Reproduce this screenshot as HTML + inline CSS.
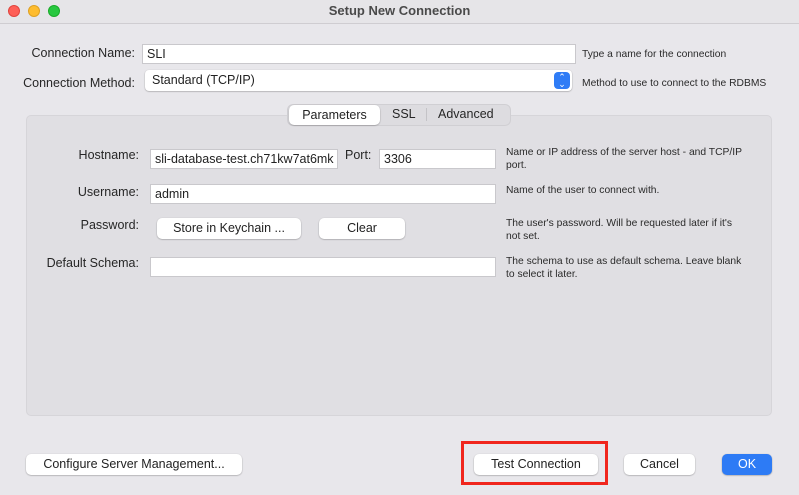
<!DOCTYPE html>
<html><head><meta charset="utf-8"><style>
*{box-sizing:border-box;margin:0;padding:0}
body{width:799px;height:495px;background:#e8e7eb;font-family:"Liberation Sans",sans-serif;font-size:12.5px;color:#262626;position:relative;overflow:hidden}
.a{position:absolute;white-space:nowrap}
.tb{left:0;top:0;width:799px;height:24px;background:#e6e5e8;border-bottom:1px solid #cfcdd1}
.dot{position:absolute;top:5px;width:12px;height:12px;border-radius:50%}
.in{position:absolute;background:#fff;border:1px solid #c9c8cc;height:20px;padding:2px 0 0 4px;font-size:12.5px;color:#222;white-space:nowrap;overflow:hidden}
.btn{position:absolute;background:#fff;border-radius:5px;box-shadow:0 0.5px 1.5px rgba(0,0,0,.35);text-align:center;height:21px;line-height:21px;font-size:12.5px;color:#222;white-space:nowrap}
.lb{position:absolute;text-align:right;font-size:12.5px;white-space:nowrap}
.h{position:absolute;font-size:10.3px;line-height:13px;color:#2a2a2a;white-space:nowrap}
</style></head><body>
<div class="a tb"></div>
<div class="dot" style="left:8px;background:#fe5f57;border:0.5px solid #e0443e"></div>
<div class="dot" style="left:28px;background:#febc2e;border:0.5px solid #dea123"></div>
<div class="dot" style="left:48px;background:#28c840;border:0.5px solid #1aab29"></div>
<div class="a" style="left:0;width:799px;top:3px;text-align:center;font-weight:bold;color:#4a4a4a;font-size:13px">Setup New Connection</div>

<div class="lb" style="right:664px;top:46px">Connection Name:</div>
<div class="in" style="left:142px;top:44px;width:434px;height:20px">SLI</div>
<div class="h" style="left:582px;top:48px">Type a name for the connection</div>
<div class="lb" style="right:664px;top:76px">Connection Method:</div>
<div class="btn" style="left:145px;top:70px;width:427px;height:21px;text-align:left;padding-left:7px;border-radius:4px">Standard (TCP/IP)</div>
<div class="a" style="left:554px;top:72px;width:16px;height:17px;background:#2f7cf6;border-radius:4px;color:#fff;font-size:9px;line-height:7px;text-align:center;padding-top:2px">⌃<br>⌄</div>
<div class="h" style="left:582px;top:77px">Method to use to connect to the RDBMS</div>

<div class="a" style="left:26px;top:115px;width:746px;height:301px;background:#e0dfe3;border:1px solid #d6d5d9;border-radius:5px"></div>
<div class="a" style="left:287px;top:104px;width:224px;height:22px;background:#dddce0;border:1px solid #d0cfd3;border-radius:6px"></div>
<div class="btn" style="left:289px;top:105px;width:91px;height:20px;line-height:20px">Parameters</div>
<div class="a" style="left:392px;top:107px">SSL</div>
<div class="a" style="left:426px;top:108px;width:1px;height:13px;background:#c4c3c7"></div>
<div class="a" style="left:438px;top:107px">Advanced</div>

<div class="lb" style="right:660px;top:148px">Hostname:</div>
<div class="in" style="left:150px;top:149px;width:188px">sli-database-test.ch71kw7at6mk</div>
<div class="a" style="left:345px;top:148px">Port:</div>
<div class="in" style="left:379px;top:149px;width:117px">3306</div>
<div class="h" style="left:506px;top:146px">Name or IP address of the server host - and TCP/IP<br>port.</div>
<div class="lb" style="right:660px;top:185px">Username:</div>
<div class="in" style="left:150px;top:184px;width:346px">admin</div>
<div class="h" style="left:506px;top:184px">Name of the user to connect with.</div>
<div class="lb" style="right:660px;top:218px">Password:</div>
<div class="btn" style="left:157px;top:218px;width:144px">Store in Keychain ...</div>
<div class="btn" style="left:319px;top:218px;width:86px">Clear</div>
<div class="h" style="left:506px;top:217px">The user's password. Will be requested later if it's<br>not set.</div>
<div class="lb" style="right:660px;top:256px">Default Schema:</div>
<div class="in" style="left:150px;top:257px;width:346px"></div>
<div class="h" style="left:506px;top:255px">The schema to use as default schema. Leave blank<br>to select it later.</div>

<div class="btn" style="left:26px;top:454px;width:216px">Configure Server Management...</div>
<div class="a" style="left:461px;top:441px;width:147px;height:44px;border:3px solid #f0261d"></div>
<div class="btn" style="left:474px;top:454px;width:124px">Test Connection</div>
<div class="btn" style="left:624px;top:454px;width:71px">Cancel</div>
<div class="btn" style="left:722px;top:454px;width:50px;background:#2d7bf5;color:#fff">OK</div>
</body></html>
